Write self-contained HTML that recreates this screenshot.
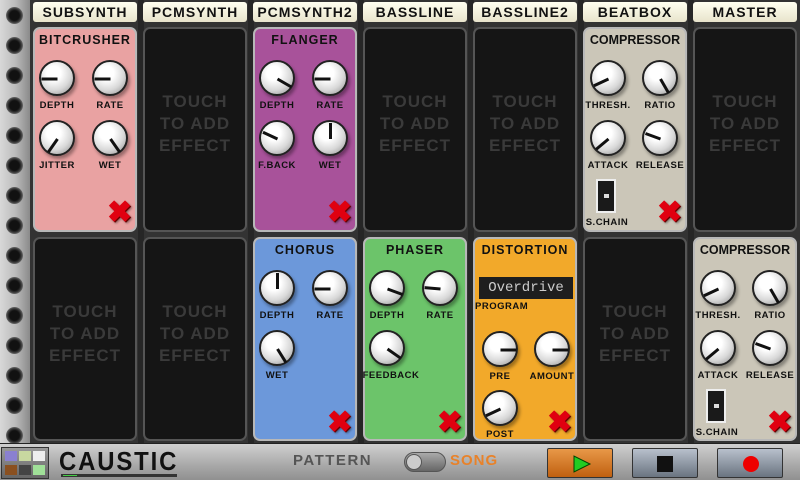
<!DOCTYPE html>
<html><head><meta charset="utf-8"><style>
*{margin:0;padding:0;box-sizing:border-box}
body{width:800px;height:480px;overflow:hidden;background:#333;font-family:"Liberation Sans",sans-serif;position:relative}
.a{position:absolute}
.strip{left:0;top:0;width:30px;height:444px;background:linear-gradient(90deg,#d8d8d8,#bdbdbd 50%,#8a8a8a)}
.hole{position:absolute;left:6px;width:17px;height:17px;border-radius:50%;background:radial-gradient(circle,#111 40%,#333 55%,#777 75%,#aaa)}
.sep{top:0;width:6px;height:444px;background:#262626}
.tab{top:2px;width:104px;height:20px;background:linear-gradient(#fffff0,#e8e4cc);border-radius:3px;font-weight:bold;font-size:14px;text-align:center;line-height:21px;color:#111;letter-spacing:1px}
.p{width:104px;border-radius:7px;border:2px solid #b8b8b8}
.e{background:#151515;border-color:#555}
.t{position:absolute;left:0;width:100%;text-align:center;color:#3a3a3a;font-weight:bold;font-size:17px;line-height:22px;letter-spacing:1px}
.ti{position:absolute;left:0;width:100%;text-align:center;font-weight:bold;font-size:12.5px;color:#111;letter-spacing:1px}
.l{position:absolute;width:60px;text-align:center;font-weight:bold;font-size:9.5px;color:#111;letter-spacing:.5px}
.k{position:absolute;width:36px;height:36px;border-radius:50%;background:radial-gradient(circle at 40% 35%,#fff 25%,#d8d8d8 60%,#8a8a8a);border:2px solid #222;box-shadow:2px 3px 3px rgba(0,0,0,.35)}
.k i{position:absolute;left:15px;top:1px;width:3px;height:16px;background:#111;transform-origin:1.5px 16px;transform:rotate(var(--a))}
.x{position:absolute;font-size:30px;font-weight:bold;color:#e00010;line-height:24px;text-shadow:1px 1px 0 #600,2px 2px 2px rgba(0,0,0,.4)}
.sw{position:absolute;width:20px;height:34px;background:#1a1a1a;border:2px solid #eee}
.sw b{position:absolute;left:6px;top:13px;width:5px;height:4px;background:#ddd}
.btn{top:448px;width:66px;height:30px;border-radius:2px;border:1px solid #333}
</style></head><body>
<div class="a strip">
<div class="hole" style="top:7px"></div><div class="hole" style="top:37px"></div><div class="hole" style="top:67px"></div><div class="hole" style="top:97px"></div><div class="hole" style="top:127px"></div><div class="hole" style="top:157px"></div><div class="hole" style="top:187px"></div><div class="hole" style="top:217px"></div><div class="hole" style="top:247px"></div><div class="hole" style="top:277px"></div><div class="hole" style="top:307px"></div><div class="hole" style="top:337px"></div><div class="hole" style="top:367px"></div><div class="hole" style="top:397px"></div><div class="hole" style="top:427px"></div>
</div>
<div class="a sep" style="left:138px"></div><div class="a sep" style="left:248px"></div><div class="a sep" style="left:358px"></div><div class="a sep" style="left:468px"></div><div class="a sep" style="left:578px"></div><div class="a sep" style="left:688px"></div>

<div class="a tab" style="left:33px">SUBSYNTH</div>
<div class="a tab" style="left:143px">PCMSYNTH</div>
<div class="a tab" style="left:253px">PCMSYNTH2</div>
<div class="a tab" style="left:363px">BASSLINE</div>
<div class="a tab" style="left:473px">BASSLINE2</div>
<div class="a tab" style="left:583px">BEATBOX</div>
<div class="a tab" style="left:693px">MASTER</div>

<div class="a p" style="left:33px;top:27px;height:205px;background:#e9a2a2">
<div class="ti" style="top:4px">BITCRUSHER</div>
<div class="k" style="left:4px;top:31px;--a:-90deg"><i></i></div>
<div class="k" style="left:57px;top:31px;--a:-90deg"><i></i></div>
<div class="l" style="left:-8px;top:71px">DEPTH</div><div class="l" style="left:45px;top:71px">RATE</div>
<div class="k" style="left:4px;top:91px;--a:-145deg"><i></i></div>
<div class="k" style="left:57px;top:91px;--a:145deg"><i></i></div>
<div class="l" style="left:-8px;top:131px">JITTER</div><div class="l" style="left:45px;top:131px">WET</div>
<div class="x" style="left:72px;top:172px">✖</div>
</div>
<div class="a p e" style="left:33px;top:237px;height:204px"><div class="t" style="top:62px">TOUCH<br>TO ADD<br>EFFECT</div></div>

<div class="a p e" style="left:143px;top:27px;height:205px"><div class="t" style="top:62px">TOUCH<br>TO ADD<br>EFFECT</div></div>
<div class="a p e" style="left:143px;top:237px;height:204px"><div class="t" style="top:62px">TOUCH<br>TO ADD<br>EFFECT</div></div>

<div class="a p" style="left:253px;top:27px;height:205px;background:#a8529a">
<div class="ti" style="top:4px">FLANGER</div>
<div class="k" style="left:4px;top:31px;--a:120deg"><i></i></div>
<div class="k" style="left:57px;top:31px;--a:-90deg"><i></i></div>
<div class="l" style="left:-8px;top:71px">DEPTH</div><div class="l" style="left:45px;top:71px">RATE</div>
<div class="k" style="left:4px;top:91px;--a:-65deg"><i></i></div>
<div class="k" style="left:57px;top:91px;--a:0deg"><i></i></div>
<div class="l" style="left:-8px;top:131px">F.BACK</div><div class="l" style="left:45px;top:131px">WET</div>
<div class="x" style="left:72px;top:172px">✖</div>
</div>
<div class="a p" style="left:253px;top:237px;height:204px;background:#6c98da">
<div class="ti" style="top:4px">CHORUS</div>
<div class="k" style="left:4px;top:31px;--a:0deg"><i></i></div>
<div class="k" style="left:57px;top:31px;--a:-90deg"><i></i></div>
<div class="l" style="left:-8px;top:71px">DEPTH</div><div class="l" style="left:45px;top:71px">RATE</div>
<div class="k" style="left:4px;top:91px;--a:148deg"><i></i></div>
<div class="l" style="left:-8px;top:131px">WET</div>
<div class="x" style="left:72px;top:172px">✖</div>
</div>

<div class="a p e" style="left:363px;top:27px;height:205px"><div class="t" style="top:62px">TOUCH<br>TO ADD<br>EFFECT</div></div>
<div class="a p" style="left:363px;top:237px;height:204px;background:#6cc46a">
<div class="ti" style="top:4px">PHASER</div>
<div class="k" style="left:4px;top:31px;--a:110deg"><i></i></div>
<div class="k" style="left:57px;top:31px;--a:-85deg"><i></i></div>
<div class="l" style="left:-8px;top:71px">DEPTH</div><div class="l" style="left:45px;top:71px">RATE</div>
<div class="k" style="left:4px;top:91px;--a:125deg"><i></i></div>
<div class="l" style="left:-4px;top:131px">FEEDBACK</div>
<div class="x" style="left:72px;top:172px">✖</div>
</div>

<div class="a p e" style="left:473px;top:27px;height:205px"><div class="t" style="top:62px">TOUCH<br>TO ADD<br>EFFECT</div></div>
<div class="a p" style="left:473px;top:237px;height:204px;background:#f2a92a">
<div class="ti" style="top:4px">DISTORTION</div>
<div class="a" style="left:4px;top:38px;width:94px;height:22px;background:#1e1e1e;color:#ccc;font-family:'Liberation Mono',monospace;font-size:14px;line-height:22px;text-align:center">Overdrive</div>
<div class="l" style="left:0;top:62px;text-align:left">PROGRAM</div>
<div class="k" style="left:7px;top:92px;--a:90deg"><i></i></div>
<div class="k" style="left:59px;top:92px;--a:90deg"><i></i></div>
<div class="l" style="left:-5px;top:132px">PRE</div><div class="l" style="left:47px;top:132px">AMOUNT</div>
<div class="k" style="left:7px;top:151px;--a:-115deg"><i></i></div>
<div class="l" style="left:-5px;top:190px">POST</div>
<div class="x" style="left:72px;top:172px">✖</div>
</div>

<div class="a p" style="left:583px;top:27px;height:205px;background:#cbc6b8">
<div class="ti" style="top:4px;letter-spacing:0">COMPRESSOR</div>
<div class="k" style="left:5px;top:31px;--a:-115deg"><i></i></div>
<div class="k" style="left:57px;top:31px;--a:150deg"><i></i></div>
<div class="l" style="left:-7px;top:71px">THRESH.</div><div class="l" style="left:45px;top:71px">RATIO</div>
<div class="k" style="left:5px;top:91px;--a:-130deg"><i></i></div>
<div class="k" style="left:57px;top:91px;--a:-70deg"><i></i></div>
<div class="l" style="left:-7px;top:131px">ATTACK</div><div class="l" style="left:45px;top:131px">RELEASE</div>
<div class="sw" style="left:11px;top:150px"><b></b></div>
<div class="l" style="left:-8px;top:188px">S.CHAIN</div>
<div class="x" style="left:72px;top:172px">✖</div>
</div>
<div class="a p e" style="left:583px;top:237px;height:204px"><div class="t" style="top:62px">TOUCH<br>TO ADD<br>EFFECT</div></div>

<div class="a p e" style="left:693px;top:27px;height:205px"><div class="t" style="top:62px">TOUCH<br>TO ADD<br>EFFECT</div></div>
<div class="a p" style="left:693px;top:237px;height:204px;background:#cbc6b8">
<div class="ti" style="top:4px;letter-spacing:0">COMPRESSOR</div>
<div class="k" style="left:5px;top:31px;--a:-115deg"><i></i></div>
<div class="k" style="left:57px;top:31px;--a:150deg"><i></i></div>
<div class="l" style="left:-7px;top:71px">THRESH.</div><div class="l" style="left:45px;top:71px">RATIO</div>
<div class="k" style="left:5px;top:91px;--a:-130deg"><i></i></div>
<div class="k" style="left:57px;top:91px;--a:-70deg"><i></i></div>
<div class="l" style="left:-7px;top:131px">ATTACK</div><div class="l" style="left:45px;top:131px">RELEASE</div>
<div class="sw" style="left:11px;top:150px"><b></b></div>
<div class="l" style="left:-8px;top:188px">S.CHAIN</div>
<div class="x" style="left:72px;top:172px">✖</div>
</div>

<div class="a" style="left:0;top:443px;width:800px;height:37px;background:linear-gradient(#d0d0d0,#a8a8a8 60%,#909090);border-top:1px solid #222"></div>
<div class="a" style="left:1px;top:447px;width:48px;height:32px;background:linear-gradient(#999,#666);border:1px solid #333"></div>
<div class="a" style="left:5px;top:451px;width:12px;height:10px;background:#8a80d0"></div>
<div class="a" style="left:19px;top:451px;width:12px;height:10px;background:#c8d8a0"></div>
<div class="a" style="left:33px;top:451px;width:12px;height:10px;background:#eee"></div>
<div class="a" style="left:5px;top:465px;width:12px;height:10px;background:#8a5020"></div>
<div class="a" style="left:19px;top:465px;width:12px;height:10px;background:#444"></div>
<div class="a" style="left:33px;top:465px;width:12px;height:10px;background:#a0e098"></div>
<div class="a" style="left:59px;top:447px;font-weight:bold;font-size:26px;color:#111;letter-spacing:2px;line-height:28px;transform:scaleX(0.92);transform-origin:left">CAUSTIC</div>
<div class="a" style="left:61px;top:474px;width:116px;height:3px;background:#333"></div>
<div class="a" style="left:63px;top:475px;width:14px;height:1px;background:#4c4"></div>
<div class="a" style="left:293px;top:452px;font-weight:bold;font-size:15px;color:#555;letter-spacing:1.5px">PATTERN</div>
<div class="a" style="left:404px;top:452px;width:42px;height:20px;border-radius:10px;background:linear-gradient(#aaa,#666);border:1px solid #555"></div>
<div class="a" style="left:406px;top:454px;width:16px;height:16px;border-radius:50%;background:#ccc;border:1px solid #555"></div>
<div class="a" style="left:450px;top:452px;font-weight:bold;font-size:15px;color:#e8822a;letter-spacing:1px">SONG</div>
<div class="a btn" style="left:547px;background:linear-gradient(#e89848,#c06010)"><svg width="66" height="30" style="position:absolute;left:0;top:0"><polygon points="26,7 26,23 42,15" fill="#2c2" stroke="#040" stroke-width="1"/></svg></div>
<div class="a btn" style="left:632px;background:linear-gradient(#b8c0cc,#6a7480)"><div class="a" style="left:24px;top:7px;width:16px;height:16px;background:#111"></div></div>
<div class="a btn" style="left:717px;background:linear-gradient(#b8c0cc,#6a7480)"><div class="a" style="left:25px;top:7px;width:16px;height:16px;border-radius:50%;background:#e00"></div></div>
</body></html>
